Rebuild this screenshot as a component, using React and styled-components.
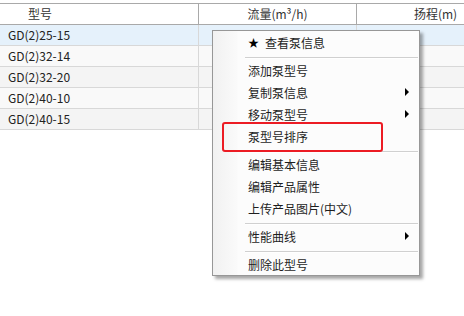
import React from 'react';
import styled, {createGlobalStyle} from 'styled-components';

const GlobalStyle = createGlobalStyle`
  html, body {
    margin: 0;
    padding: 0;
    background: #ffffff;
  }
  body {
    font-family: "Noto Sans CJK SC", "Noto Sans", sans-serif;
    font-size: 12px;
    color: #222;
  }
`

const rows = ['GD(2)25-15', 'GD(2)32-14', 'GD(2)32-20', 'GD(2)40-10', 'GD(2)40-15'];

const menu = [
  {label: '查看泵信息', star: true},
  {sep: true},
  {label: '添加泵型号'},
  {label: '复制泵信息', sub: true},
  {label: '移动泵型号', sub: true},
  {label: '泵型号排序', marked: true},
  {sep: true},
  {label: '编辑基本信息'},
  {label: '编辑产品属性'},
  {label: '上传产品图片(中文)'},
  {sep: true},
  {label: '性能曲线', sub: true},
  {sep: true},
  {label: '删除此型号'},
];

function App() {
  return (
    <Page>
      <GlobalStyle />
      <Grid>
        <HeadCell align="left">型号</HeadCell>
        <HeadCell>流量(m³/h)</HeadCell>
        <HeadCell>扬程(m)</HeadCell>
        {rows.map((r, i) => (
          <React.Fragment key={r}>
            <Cell selected={i === 0} odd={i % 2 === 1}>{r}</Cell>
            <Cell selected={i === 0} odd={i % 2 === 1} />
            <Cell selected={i === 0} odd={i % 2 === 1} />
          </React.Fragment>
        ))}
      </Grid>

      <Menu>
        {menu.map((m, i) =>
          m.sep ? <Separator key={i} /> : (
            <Item key={i}>
              {m.star && <Star>★</Star>}
              <span>{m.label}</span>
              {m.sub && <Arrow />}
              {m.marked && <Highlight />}
            </Item>
          )
        )}
      </Menu>
    </Page>
  );
}

export default App;

const Page = styled.div`
  position: relative;
  width: 464px;
  height: 316px;
  padding-top: 3px;
  box-sizing: border-box;
  overflow: hidden;
`

const Grid = styled.div`
  display: grid;
  grid-template-columns: 199px 158px 158px;
  border-top: 1px solid #a9a9a9;
`

const HeadCell = styled.div`
  height: 20px;
  line-height: 20px;
  border-bottom: 1px solid #a9a9a9;
  border-right: 1px solid #a9a9a9;
  text-align: ${p => p.align === 'left' ? 'left' : 'center'};
  padding-left: ${p => p.align === 'left' ? '28px' : '0'};
  color: #333;
  white-space: nowrap;
  background: #fff;
`

const Cell = styled.div`
  height: 20px;
  line-height: 20px;
  padding-left: 8px;
  border-bottom: 1px solid #d8d8d8;
  border-right: 1px solid #d8d8d8;
  background: ${p => p.selected ? '#e5f1fb' : p.odd ? '#f9f9f9' : '#f4f4f4'};
  color: #222;
  white-space: nowrap;
`

const Menu = styled.div`
  position: absolute;
  left: 212px;
  top: 30px;
  width: 206px;
  border: 1px solid #979797;
  background: linear-gradient(to right, #f1f1f1 0px, #fafafa 24px, #fcfcfc 25px, #fcfcfc 100%);
  box-shadow: 3px 3px 3px rgba(0, 0, 0, 0.35);
`

const Item = styled.div`
  position: relative;
  display: flex;
  align-items: center;
  height: 22px;
  padding-left: 35px;
  color: #1e1e1e;
  white-space: nowrap;
`

const Star = styled.span`
  display: inline-block;
  width: 17px;
  font-size: 11px;
  color: #000;
`

const Arrow = styled.span`
  margin-left: auto;
  margin-right: 10px;
  width: 0;
  height: 0;
  border-top: 4px solid transparent;
  border-bottom: 4px solid transparent;
  border-left: 4px solid #000;
`

const Separator = styled.div`
  height: 0;
  margin: 4px 1px 0 32px;
  border-top: 1px solid #d0d0d0;
  border-bottom: 1px solid #fff;
`

const Highlight = styled.div`
  position: absolute;
  left: 9px;
  top: -3px;
  width: 157px;
  height: 26px;
  border: 2px solid #ec1c24;
  border-radius: 3px;
  pointer-events: none;
`
